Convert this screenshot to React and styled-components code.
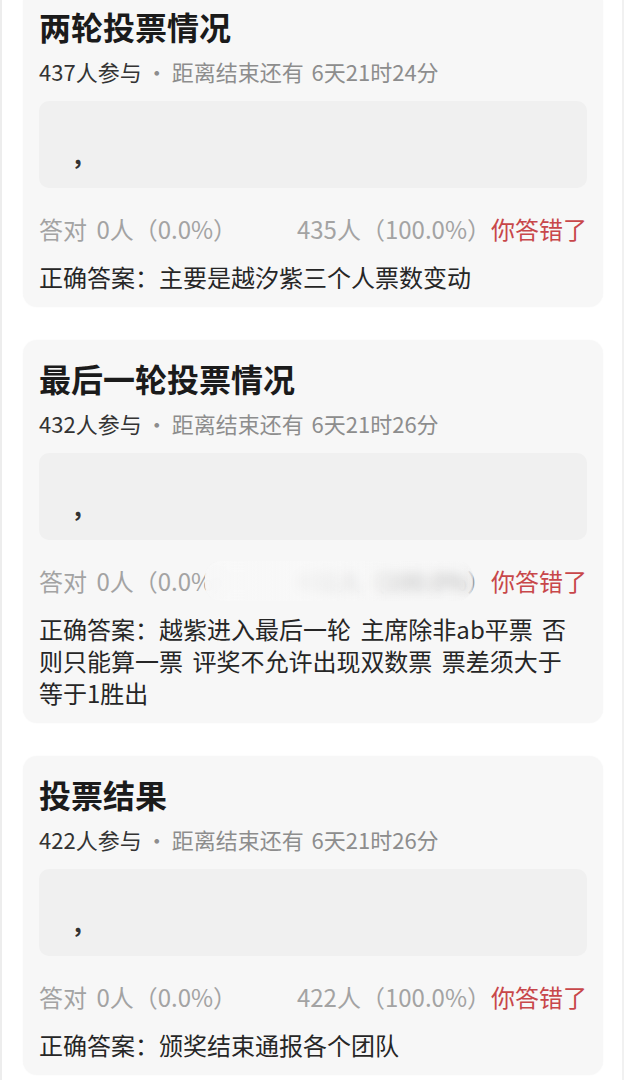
import React from "react";
import styled, { createGlobalStyle } from "styled-components";

const GlobalStyle = createGlobalStyle`
  html, body {
    margin: 0;
    padding: 0;
    background: #ffffff;
  }
  body {
    font-family: "Noto Sans CJK SC", "Noto Sans", sans-serif;
    -webkit-font-smoothing: antialiased;
  }
`;

const Page = styled.div`
  width: 624px;
  height: 1080px;
  overflow: hidden;
  box-sizing: border-box;
  background: #ffffff;
  border-left: 2px solid #ededed;
  border-right: 2px solid #f1f1f1;
`;

const List = styled.div`
  display: flex;
  flex-direction: column;
  gap: 33px;
  padding-left: 21px;
  margin-top: -12px;
`;

const Card = styled.section`
  width: 580px;
  box-sizing: border-box;
  background: #f7f7f7;
  border-radius: 14px;
  padding: 18px 16px 14px;
  box-shadow: 0 0 2px rgba(0, 0, 0, 0.03);
`;

const Title = styled.h2`
  margin: 0;
  font-size: 32px;
  line-height: 40px;
  font-weight: 700;
  color: #1b1b1b;
`;

const Meta = styled.div`
  margin-top: 10px;
  font-size: 22px;
  line-height: 30px;
  color: #8d8d8d;
  word-spacing: 3px;
  white-space: nowrap;
`;

const Count = styled.span`
  color: #333333;
`;

const Dot = styled.span`
  display: inline-block;
  width: 30px;
  text-align: center;
  color: #8d8d8d;
`;

const OptionBox = styled.div`
  margin-top: 15px;
  height: 87px;
  box-sizing: border-box;
  background: #f0f0f0;
  border-radius: 10px;
  display: flex;
  align-items: center;
  padding: 18px 0 0 35px;
  font-size: 24px;
  font-weight: 700;
  color: #333333;
`;

const StatsRow = styled.div`
  position: relative;
  margin-top: 25px;
  display: flex;
  justify-content: space-between;
  align-items: center;
  font-size: 24px;
  line-height: 32px;
  color: #a3a3a3;
  word-spacing: 4px;
  white-space: nowrap;
`;

const Wrong = styled.span`
  color: #c8474a;
`;

const Blur = styled.div`
  position: absolute;
  top: -4px;
  bottom: -4px;
  left: 166px;
  width: 268px;
  backdrop-filter: blur(6px);
  -webkit-backdrop-filter: blur(6px);
  background: linear-gradient(
    90deg,
    rgba(248, 248, 248, 0.92) 0%,
    rgba(248, 248, 248, 0.8) 40%,
    rgba(248, 248, 248, 0.35) 65%,
    rgba(248, 248, 248, 0.15) 100%
  );
  border-radius: 16px;
`;

const Answer = styled.p`
  margin: 16px 0 0;
  font-size: 24px;
  line-height: 32px;
  color: #262626;
  word-spacing: 4px;
`;

const polls = [
  {
    title: "两轮投票情况",
    count: "437人参与",
    remain: "距离结束还有 6天21时24分",
    right: "答对 0人（0.0%）",
    wrong: "435人（100.0%）",
    answer: ["正确答案：主要是越汐紫三个人票数变动"],
  },
  {
    title: "最后一轮投票情况",
    count: "432人参与",
    remain: "距离结束还有 6天21时26分",
    right: "答对 0人（0.0%）",
    wrong: "432人（100.0%）",
    blurred: true,
    answer: [
      "正确答案：越紫进入最后一轮 主席除非ab平票 否",
      "则只能算一票 评奖不允许出现双数票 票差须大于",
      "等于1胜出",
    ],
  },
  {
    title: "投票结果",
    count: "422人参与",
    remain: "距离结束还有 6天21时26分",
    right: "答对 0人（0.0%）",
    wrong: "422人（100.0%）",
    answer: ["正确答案：颁奖结束通报各个团队"],
  },
];

function PollCard({ poll }) {
  return (
    <Card>
      <Title>{poll.title}</Title>
      <Meta>
        <Count>{poll.count}</Count>
        <Dot>·</Dot>
        {poll.remain}
      </Meta>
      <OptionBox>,</OptionBox>
      <StatsRow>
        <span>{poll.right}</span>
        <span>
          {poll.wrong}
          <Wrong>你答错了</Wrong>
        </span>
        {poll.blurred && <Blur />}
      </StatsRow>
      <Answer>
        {poll.answer.map((line, i) => (
          <React.Fragment key={i}>
            {i > 0 && <br />}
            {line}
          </React.Fragment>
        ))}
      </Answer>
    </Card>
  );
}

export default function App() {
  return (
    <>
      <GlobalStyle />
      <Page>
        <List>
          {polls.map((p) => (
            <PollCard key={p.title} poll={p} />
          ))}
        </List>
      </Page>
    </>
  );
}
